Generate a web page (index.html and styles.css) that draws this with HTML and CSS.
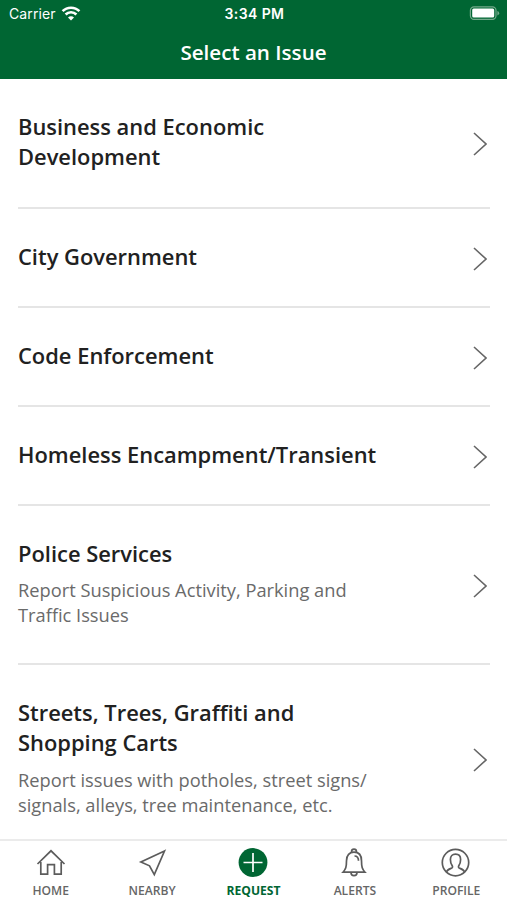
FILE: index.html
```html
<!DOCTYPE html>
<html lang="en">
<head>
  <meta charset="UTF-8" />
  <meta name="viewport" content="width=device-width, initial-scale=1.0" />
  <title>Select an Issue</title>

  <link rel="stylesheet" href="styles.css">
</head>
<body>

  <div class="app">
    <!-- Header -->
    <header class="header">
      <div class="status-bar">
        <div class="carrier">
          <span>Carrier</span>
          <svg class="wifi" width="20" height="15" viewBox="0 0 20 15">
            <path d="M1.6 5.2a11.8 11.8 0 0 1 16.8 0M4.6 8.5a7.5 7.5 0 0 1 10.8 0" fill="none" stroke="#fff" stroke-width="2.6" />
            <path d="M10 14.5l-3-3a4.2 4.2 0 0 1 6 0z" fill="#fff" />
          </svg>
        </div>
        <span class="time">3:34 PM</span>
        <svg class="battery" width="31" height="15" viewBox="0 0 31 15">
          <rect x="1.4" y="0.8" width="25.6" height="12.6" rx="3.6" fill="none" stroke="#73a98b" stroke-width="1.2" />
          <rect x="3.2" y="2.6" width="22" height="9" rx="1.5" fill="#fff" />
          <path d="M28.4 5v4.4q1.8-.6 1.8-2.2T28.4 5z" fill="#73a98b" />
        </svg>
      </div>
      <h1>Select an Issue</h1>
    </header>

    <!-- Issue list -->
    <main class="issue-list">
      <a class="issue">
        <div class="issue-text">
          <h2>Business and Economic<br>Development</h2>
        </div>
        <svg class="chevron" viewBox="0 0 14 24"><path d="M1 1l12 11L1 23" /></svg>
      </a>
      <a class="issue">
        <div class="issue-text">
          <h2>City Government</h2>
        </div>
        <svg class="chevron" viewBox="0 0 14 24"><path d="M1 1l12 11L1 23" /></svg>
      </a>
      <a class="issue">
        <div class="issue-text">
          <h2>Code Enforcement</h2>
        </div>
        <svg class="chevron" viewBox="0 0 14 24"><path d="M1 1l12 11L1 23" /></svg>
      </a>
      <a class="issue">
        <div class="issue-text">
          <h2>Homeless Encampment/Transient</h2>
        </div>
        <svg class="chevron" viewBox="0 0 14 24"><path d="M1 1l12 11L1 23" /></svg>
      </a>
      <a class="issue">
        <div class="issue-text">
          <h2>Police Services</h2>
          <p>Report Suspicious Activity, Parking and<br>Traffic Issues</p>
        </div>
        <svg class="chevron" viewBox="0 0 14 24"><path d="M1 1l12 11L1 23" /></svg>
      </a>
      <a class="issue">
        <div class="issue-text">
          <h2>Streets, Trees, Graffiti and<br>Shopping Carts</h2>
          <p>Report issues with potholes, street signs/<br>signals, alleys, tree maintenance, etc.</p>
        </div>
        <svg class="chevron" viewBox="0 0 14 24"><path d="M1 1l12 11L1 23" /></svg>
      </a>
    </main>

    <!-- Tab bar -->
    <nav class="tab-bar">
      <a class="tab">
        <svg viewBox="0 0 30 30">
          <path d="M1.5 16L15 2.8 28.5 16M4.8 14v12.2h6.8V16.6h6.8v9.6h6.8V14" />
        </svg>
        <span>HOME</span>
      </a>
      <a class="tab">
        <svg viewBox="0 0 30 30">
          <path d="M27.5 3L3.9 14l8.6 3.8 4.8 8.8z" />
        </svg>
        <span>NEARBY</span>
      </a>
      <a class="tab active">
        <svg viewBox="0 0 30 30">
          <circle class="disc" cx="15" cy="14.5" r="14.4" />
          <path class="plus" d="M15 5v19M5.5 14.5h19" />
        </svg>
        <span>REQUEST</span>
      </a>
      <a class="tab">
        <svg viewBox="0 0 30 30">
          <path d="M11.6 4.4v-.8a2.4 2.4 0 0 1 4.8 0v.8M3 24.200c2.700-3 3.500-5 3.500-11.500C6.500 7.200 9.500 4.200 14 4.200s7.500 3 7.500 8.500c0 6.500.8 8.500 3.500 11.500z" />
          <path d="M11 24.5a3 3.2 0 0 0 6 0M14.5 8c2.700 0 4 1.600 4 4.800" />
        </svg>
        <span>ALERTS</span>
      </a>
      <a class="tab">
        <svg viewBox="0 0 30 30">
          <circle cx="14.5" cy="14.6" r="13.2" />
          <path d="M5.6 23.8c.7-2.3 3-2.9 5.2-3.800.9-.5.9-1.600.3-2.500-1.100-1.600-1.700-3.500-1.700-6 0-3.300 2-5.300 5.100-5.300s5.100 2 5.100 5.300c0 2.500-.6 4.400-1.700 6-.6.9-.6 2 .3 2.500 2.200.9 4.500 1.500 5.200 3.800" />
        </svg>
        <span>PROFILE</span>
      </a>
    </nav>
  </div>

</body>
</html>
```
FILE: styles.css
```css
* {
  box-sizing: border-box;
}

body {
  font-family: "Open Sans", sans-serif;
  background-color: #fff;
  color: #212121;
  margin: 0;
}

h1, h2, p {
  margin: 0;
}

.app {
  display: flex;
  flex-direction: column;
  height: 900px;
  overflow: hidden;
}

.header {
  flex: none;
  height: 79px;
  background-color: #006633;
  color: #fff;
}

.status-bar {
  display: grid;
  grid-template-columns: 1fr auto 1fr;
  align-items: center;
  height: 27px;
  padding: 0 7px 0 9px;
  font-family: Inter, sans-serif;
  font-size: 14px;
}

.carrier {
  display: flex;
  align-items: center;
  gap: 5px;
  letter-spacing: 0.1px;
}

.time {
  font-weight: 600;
  letter-spacing: 0.4px;
}

.battery {
  justify-self: end;
}

.header h1 {
  font-size: 20.6px;
  font-weight: 600;
  line-height: 50px;
  text-align: center;
}

.issue-list {
  flex: 1;
  min-height: 0;
  padding: 0 17px 0 18px;
  overflow: hidden;
}

.issue {
  display: flex;
  justify-content: space-between;
  align-items: center;
  padding: 33px 3px 34px 0;
  border-bottom: 2px solid #e5e5e5;
}

.issue:first-child {
  padding-bottom: 35px;
}

.issue h2 {
  font-size: 21.9px;
  font-weight: 600;
  line-height: 30px;
}

.issue p {
  margin-top: 8px;
  padding-bottom: 2px;
  color: #6a6a6a;
  font-size: 18.28px;
  line-height: 25px;
}

.issue:last-child p {
  margin-top: 9px;
}

.chevron {
  flex: none;
  width: 14px;
  height: 24px;
  margin-top: 3px;
  fill: none;
  stroke: #666;
  stroke-width: 1.6;
}

.tab-bar {
  flex: none;
  display: grid;
  grid-template-columns: repeat(5, 1fr);
  height: 61px;
  border-top: 2px solid #ebebeb;
}

.tab {
  display: flex;
  flex-direction: column;
  align-items: center;
  padding-top: 7px;
  color: #666;
  font-size: 12.1px;
  font-weight: 600;
  line-height: 16px;
}

.tab svg {
  width: 30px;
  height: 30px;
  margin-bottom: 5px;
  fill: none;
  stroke: #5c5c5c;
  stroke-width: 1.7;
}

.tab.active {
  color: #006633;
  font-weight: 700;
}

.tab .disc {
  fill: #006633;
  stroke: none;
}

.tab .plus {
  stroke: #fff;
}
```
